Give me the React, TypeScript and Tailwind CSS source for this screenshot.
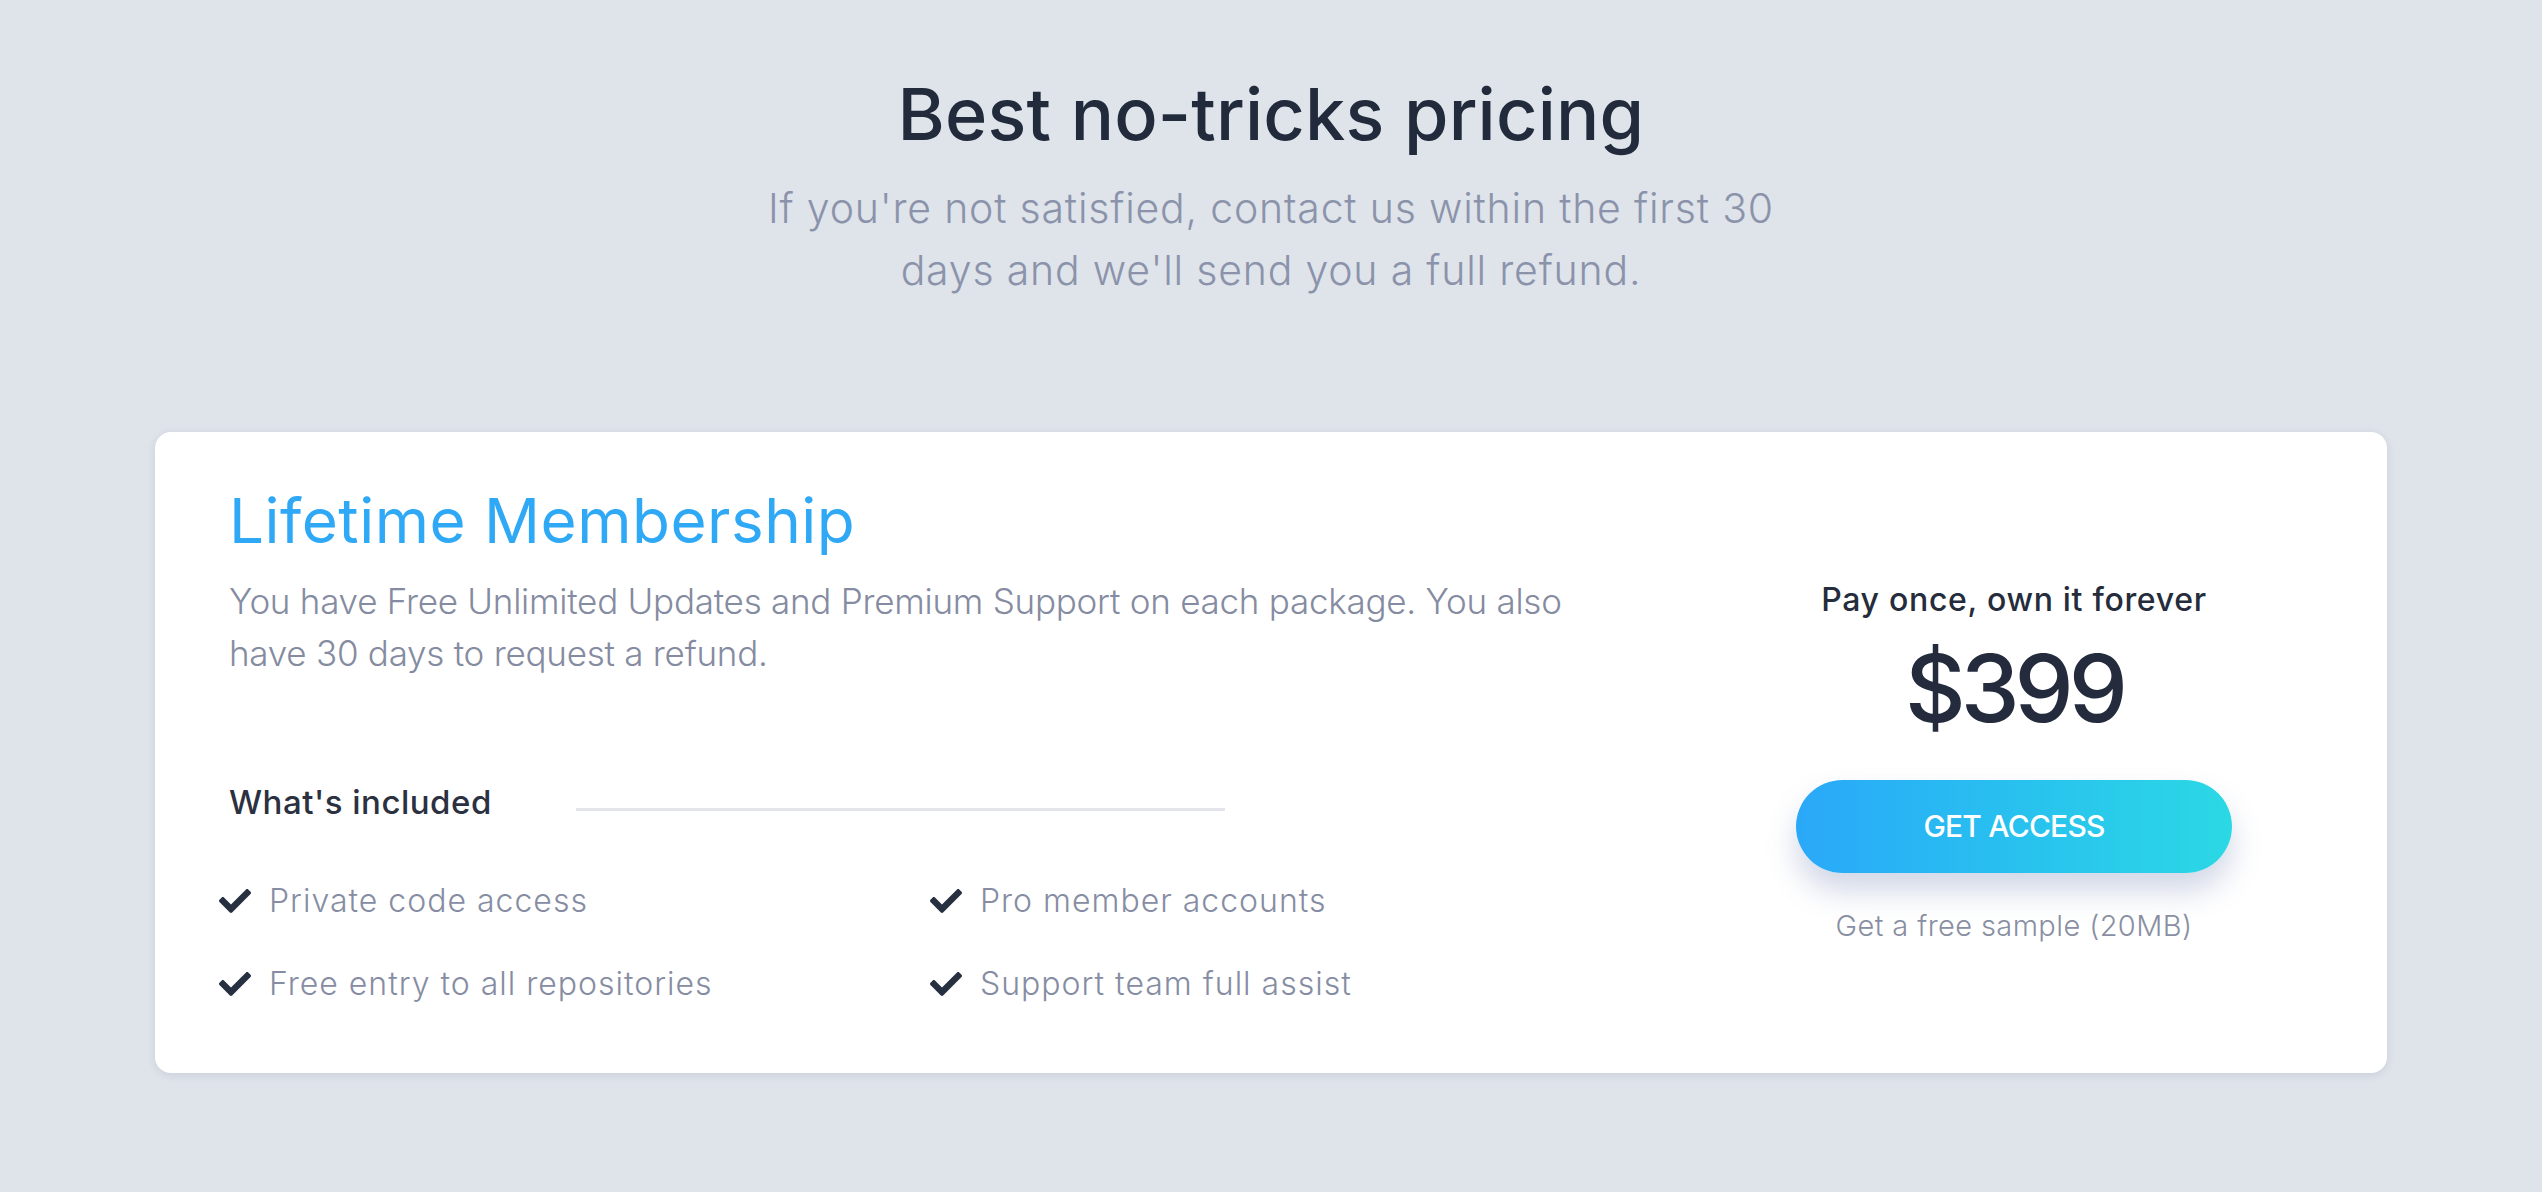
import React from "react";
import { FaCheck } from "react-icons/fa";

const features = [
  "Private code access",
  "Pro member accounts",
  "Free entry to all repositories",
  "Support team full assist",
];

export default function App() {
  return (
    <div className="min-h-[1192px] w-full bg-[#dfe3ea] font-['Inter',sans-serif] pt-[70px]">
      <div className="flex flex-col items-center text-center">
        <h1 className="text-[72px] leading-[88px] font-medium text-[#222b3c] tracking-[0.2px]">
          Best no-tricks pricing
        </h1>
        <p className="mt-[19px] text-[41px] leading-[62px] font-light text-[#8b93aa] tracking-[0.8px]">
          If you're not satisfied, contact us within the first 30
          <br />
          days and we'll send you a full refund.
        </p>
      </div>

      <div className="mx-[155px] mt-[131px] flex rounded-[16px] bg-white shadow-[0_2px_8px_rgba(60,70,100,0.12)]">
        <div className="w-[1450px] pl-[74px] pt-[51px] pb-[65px]">
          <h2 className="text-[62px] leading-[76px] font-normal text-[#2fa8f6] tracking-[0.5px]">
            Lifetime Membership
          </h2>
          <p className="mt-[16px] w-[1380px] text-[35px] leading-[52px] font-light text-[#858ba0] tracking-[-0.25px]">
            You have Free Unlimited Updates and Premium Support on each package. You also have 30 days to request a refund.
          </p>
          <div className="mt-[99px] flex items-center">
            <span className="text-[33px] leading-[48px] font-medium text-[#2b3140] tracking-[0.5px]">
              What's included
            </span>
            <div className="ml-[84px] mt-[14px] h-[3px] w-[649px] bg-[#e3e5ea]" />
          </div>
          <div className="-ml-[10px] mt-[51px] grid grid-cols-[711px_1fr] gap-y-[35px]">
            {features.map((f) => (
              <div key={f} className="flex items-center">
                <FaCheck className="h-[32px] w-[32px] text-[#273041]" />
                <span className="ml-[18px] text-[32px] leading-[48px] font-light text-[#868da3] tracking-[1px]">
                  {f}
                </span>
              </div>
            ))}
          </div>
        </div>

        <div className="ml-auto mr-[58px] flex w-[630px] flex-col items-center pt-[144px]">
          <div className="text-[32px] leading-[48px] font-medium text-[#252c3b] tracking-[0.7px]">
            Pay once, own it forever
          </div>
          <div className="mt-[16px] text-[94px] leading-[96px] font-medium text-[#232b3d] tracking-[-5px]">
            $399
          </div>
          <button className="mt-[44px] flex h-[93px] w-[436px] items-center justify-center rounded-full bg-gradient-to-r from-[#2aa8f8] to-[#2cd8e4] text-[30px] font-medium text-white tracking-[-0.8px] shadow-[0_18px_30px_rgba(90,110,170,0.28)]">
            GET ACCESS
          </button>
          <div className="mt-[31px] text-[29px] leading-[44px] font-light text-[#898fa3] tracking-[0.4px]">
            Get a free sample (20MB)
          </div>
        </div>
      </div>
    </div>
  );
}
